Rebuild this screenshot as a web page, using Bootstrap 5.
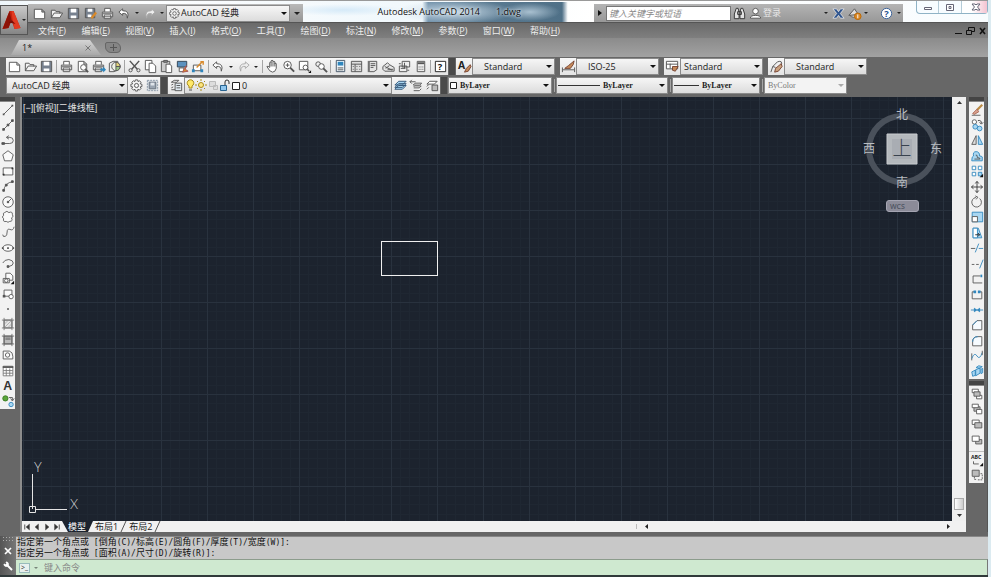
<!DOCTYPE html>
<html lang="zh-CN">
<head>
<meta charset="utf-8">
<meta name="viewport" content="width=device-width, initial-scale=1">
<title>Autodesk AutoCAD 2014 - 1.dwg</title>
<link href="https://cdn.jsdelivr.net/npm/bootstrap@5.3.0/dist/css/bootstrap.min.css" rel="stylesheet">
<style>
:root{--face:#676767;--canvas:#1c232e;--ink:#222}
body{font-family:"Open Sans","Noto Sans CJK SC",sans-serif;font-size:9px;line-height:12px;color:var(--ink);background:var(--face);border-right:3px solid #dcebf1}
button,select,input{font:inherit;color:inherit}
button{background:none;border:0;padding:0}
svg{display:block;flex:none;overflow:visible}
.caption{height:22px;border-top:1px solid #999;background:linear-gradient(90deg,#eef6fb,#fff 8%,#f1f8fc 40%,#fff 60%,#f8fcfe)}
.app-btn{width:28px;height:30px;border:1px solid #555;background:linear-gradient(#c9c9c9,#858585);z-index:3}
.app-slot{width:28px}
.qat{height:18px;background:linear-gradient(#b9b9b9,#959595);padding-left:3px;padding-right:3px}
.cell{width:16px;height:17px;display:flex;align-items:center;justify-content:center;flex:none}
.cell-wide{width:17px}
.cell-slim{width:8px}
.strip .cell-slim{width:9px}
.tri{width:0;height:0;border:3px solid transparent;border-top-color:#222;border-bottom:0}
.tri-sm{border-width:2px;border-bottom:0}
.doc-title{background:radial-gradient(ellipse 60px 12px at 52% 50%,#c9dbe8,transparent),radial-gradient(ellipse 30px 9px at 78% 50%,#a9c0d0,transparent),radial-gradient(ellipse 60px 6px at 14% 40%,#d6eaf8,transparent),linear-gradient(90deg,transparent 41%,#6f8fa8 43%,#5b7b92 60%,#4f7087 89%,transparent 91%);height:20px;color:#111;text-shadow:0 0 3px #fff}
.doc-left{width:177px}
.pick{appearance:none;border:1px solid #8a8a8a;border-radius:0;outline-offset:-1px;height:17px;padding:0 12px 0 5px;line-height:14px;background:linear-gradient(#f6f6f6,#dcdcdc) padding-box;color:#222}
.pick-wrap{position:relative;display:flex}
.pick-wrap::after{content:"";position:absolute;right:3px;top:7px;border:3px solid transparent;border-top-color:#111;border-bottom:0;pointer-events:none}
.pick-wrap.off::after{border-top-color:#aaa}
.pick-wrap.off .pick{background:#f3f3f3;color:#777;font-weight:400;opacity:1}
.w-style{width:83px}.w-ws{width:122px}.w-qws{width:124px}.w-color{width:104px}.w-lt{width:112px}.w-lw{width:88px}.w-layer{width:208px}
.pick.std{padding-left:11px}
.pick.has-gear{padding-left:14px}
.pick.has-swatch{padding-left:11px}
.pick.has-line{padding-left:46px}
.pick.has-dash{padding-left:29px}
.pick.has-layer{padding-left:57px}
.pick.pad-s{padding-left:3px}
.row-gap{margin-right:5px}
.prop{font-family:"Liberation Serif","Noto Sans CJK SC",serif;font-weight:700;font-size:8px}
.lead-icons{position:absolute;left:2px;top:1px;height:15px;display:flex;align-items:center;pointer-events:none}
.menubar{height:16px;background:linear-gradient(#6a6a6a,#7f7f7f);border-top:1px solid #555}
.menubar a{color:#eee;text-decoration:none;white-space:nowrap}
.menubar nav{padding-left:38px;width:560px}
.doc-tabs{height:19px;background:linear-gradient(#8b8b8b,#a2a2a2);padding-left:11px}
.doc-tab{width:90px;height:15px;background:linear-gradient(#d5d5d5,#a9a9a9);clip-path:polygon(8px 0,79px 0,90px 100%,0 100%);padding:0 10px 0 11px}
.new-tab{width:16px;height:11px;background:#858585;border:1px solid #666;border-radius:2px 6px 4px 6px}
.bar{height:19px;padding-left:6px}
.strip{height:17px;background:linear-gradient(#f7f7f7,#e4e4e4);display:flex;flex:none}
.rule{width:1px;height:13px;background:#a5a5a5;margin:2px 1px 2px 2px;flex:none}
.grip{width:6px;height:17px;background:#4a4a4a;flex:none;margin:0 1px}
.info{width:309px;height:18px;background:linear-gradient(#b4b4b4,#989898)}
.search{width:125px;height:15px;border:1px solid #777;background:#fff;font-style:italic;padding:0 2px;border-radius:0}
.search::placeholder,.cmd-in::placeholder{color:#888;opacity:1}
.win{width:72px;height:13px;border:1px solid #8fb3c6;border-top:0;border-radius:0 0 4px 4px;background:#f7fcff;margin-left:13px}
.win button{border-right:1px solid #b5ccd8;height:12px}
.win button:last-child{border:0;background:linear-gradient(90deg,#fff 40%,#f4c3d1)}
#work{margin-top:2px}
.palette{width:15px;background:#f2f2f2}
.palette .cell{width:15px;height:auto;flex:1 1 0}
.pal-top{width:15px;height:5px;background:#444;border-bottom:1px solid #888}
.pal-next{margin-top:2px}
.h-draw{height:307px}.h-mod{height:277px}.h-ord{height:97px}
.frame{border-left:2px solid #8c8c8c}
.side{width:20px}
.side-r{width:22px;padding-left:3px;border-right:1px solid #555}
.canvas{background:var(--canvas);position:relative;overflow:hidden}
.over{position:absolute}
.view-label{left:1px;top:5px;color:#e4e4e4;font-family:"Liberation Sans","Noto Sans CJK SC",sans-serif}
.shape{left:359px;top:144px;width:57px;height:35px;border:1px solid #f0f0f0}
.ucs{left:6px;bottom:0}
.cube{right:8px;top:9px}
.wcs{right:33px;top:103px;width:33px;height:12px;border:1px solid #a5a5b2;border-radius:3px;background:#8b8b98;color:#4d5361;font-size:7px;font-weight:600;line-height:9px;text-align:left;padding-left:3px}
.vscroll{width:14px;background:#efefef}
.thumb{width:10px;height:12px;border:1px solid #aaa;background:linear-gradient(90deg,#fff,#ccc)}
.layouts{height:11px;background:#f1f1f1}
.layouts .cell{width:10px;height:11px}
.lay{height:11px;line-height:11px;padding:0 2px}
.lay.on{background:var(--canvas);color:#fff;clip-path:polygon(0 0,100% 0,26px 100%,6px 100%);width:31px;padding:0 0 0 6px}
.slant{width:7px;height:11px}
.hscroll{width:314px;border-left:1px solid #bbb}
.cmd{margin-top:4px;border-bottom:2px solid #30393a}
.cmd-side{width:16px;background:linear-gradient(90deg,#555,#777)}
.dots{width:12px;height:5px;background:radial-gradient(#aaa 1px,transparent 1px) 0 0/3px 3px}
.history{background:#c8c8c8;border-top:1px solid #888;padding:0 1px;height:23px;line-height:11px;color:#111;font-family:"Liberation Sans","Noto Sans CJK SC",sans-serif}
.history p{margin:0;white-space:pre}
.history code{font:8px/10px "DejaVu Sans Mono",monospace;color:inherit}
.cmd-row{height:16px;background:#cfe9d0;border-top:1px solid #8c9c8c;border-right:1px solid #777}
.cmd-in{background:none;border:0;outline:0}
.prompt{width:11px;height:10px;border:1px solid #9bb;background:#e8f0ee;font-size:7px;line-height:8px;margin-left:3px}
</style>
<script src="https://cdn.jsdelivr.net/npm/bootstrap@5.3.0/dist/js/bootstrap.bundle.min.js"></script>
</head>
<body class="vh-100 d-flex flex-column overflow-hidden">

<header>
  <div class="caption d-flex align-items-end">
    <div class="app-slot align-self-start flex-shrink-0 pt-1">
      <button class="app-btn position-relative d-flex align-items-center" aria-label="应用程序菜单">
        <svg width="21" height="22" viewBox="0 0 20 22"><path d="M8 2h4l7 17-6 1-3-9-3 8-6 1z" fill="#c8230f"/><path d="M8 2l2 9-3 8-6 1z" fill="#8d1207"/><path d="M10 2l1 8 2 10 6-1L12 2z" fill="#e23a20"/><path d="M7 14l3-3 4 4-4-1z" fill="#7a0d05"/></svg>
        <i class="tri tri-sm"></i>
      </button>
    </div>
    <div class="qat d-flex align-items-center flex-shrink-0">
      <div class="d-flex" data-tools="new open save saveas print undo v redo v" data-wide></div>
      <label class="pick-wrap"><span class="lead-icons" data-icon="gear"></span>
        <select class="pick has-gear w-qws" aria-label="工作空间"><option>AutoCAD 经典</option></select></label>
      <button class="ps-1" aria-label="自定义"><i class="tri d-block"></i></button>
    </div>
    <div class="doc-title flex-fill d-flex align-items-center">
      <span class="doc-left text-end">Autodesk AutoCAD 2014</span><span class="ps-3">1.dwg</span>
    </div>
    <div class="info d-flex align-items-center flex-shrink-0">
      <button class="px-1" aria-label="展开"><svg width="4" height="6"><path d="M0 0l4 3-4 3z" fill="#111"/></svg></button>
      <input class="search" type="search" placeholder="键入关键字或短语" aria-label="搜索">
      <div class="d-flex" data-tools="find user"></div>
      <a href="#" class="text-white text-decoration-none opacity-75">登录</a>
      <div class="d-flex ms-auto" data-tools="v exch a360 v"></div>
      <div class="d-flex ms-2" data-tools="help v" data-wide></div>
    </div>
    <div class="win d-flex align-self-start">
      <button class="flex-fill" aria-label="最小化"><svg class="mx-auto" width="10" height="10" viewBox="0 0 10 10"><path d="M1.500 5.500h7v2h-7z" fill="#fff" stroke="#667"/></svg></button>
      <button class="flex-fill" aria-label="还原"><svg class="mx-auto" width="10" height="10" viewBox="0 0 10 10"><path d="M1.500 2.500h7v6h-7zM4 4.500h2v2H4z" fill="#fff" stroke="#667"/></svg></button>
      <button class="flex-fill ps-1" aria-label="关闭"><svg class="mx-auto" width="10" height="10" viewBox="0 0 10 10"><path d="M1 2h3l1 1 1-1h3L6.500 5 9 8H6L5 7 4 8H1l2.500-3z" fill="#fff" stroke="#667"/></svg></button>
    </div>
  </div>

  <div class="menubar d-flex align-items-center justify-content-between">
    <nav class="d-flex justify-content-between" aria-label="主菜单">
      <a href="#">文件(<u>F</u>)</a><a href="#">编辑(<u>E</u>)</a><a href="#">视图(<u>V</u>)</a><a href="#">插入(<u>I</u>)</a><a href="#">格式(<u>O</u>)</a><a href="#">工具(<u>T</u>)</a><a href="#">绘图(<u>D</u>)</a><a href="#">标注(<u>N</u>)</a><a href="#">修改(<u>M</u>)</a><a href="#">参数(<u>P</u>)</a><a href="#">窗口(<u>W</u>)</a><a href="#">帮助(<u>H</u>)</a>
    </nav>
    <svg width="34" height="10" viewBox="0 0 34 10" fill="none" stroke="#111"><path d="M1 7.500h7M12.500 4.500h5v4h-5zM14.500 4V1.500h6v4H18"/><path d="M26 2l5 6M31 2l-5 6" stroke-width="1.600"/></svg>
  </div>

  <div class="doc-tabs d-flex align-items-center">
    <div class="doc-tab d-flex justify-content-between align-items-center">
      <a href="#" class="text-reset text-decoration-none">1*</a>
      <button aria-label="关闭图形"><svg width="6" height="6" viewBox="0 0 6 6"><path d="M.5.5l5 5m0-5l-5 5" stroke="#777"/></svg></button>
    </div>
    <button class="new-tab ms-1 d-flex align-items-center justify-content-center" aria-label="新建图形"><svg width="7" height="7" viewBox="0 0 7 7"><path d="M3.500 0v7M0 3.500h7" stroke="#555"/></svg></button>
  </div>
</header>

<div class="bar d-flex align-items-center">
  <div class="strip" data-tools="new open save | print preview publish dwf | cut copy paste match block | undo v redo v | pan zoomrt zoomwin zoomprev | props dcenter palettes sheet markup calc | helpq"></div>
  <span class="grip"></span>
  <div class="strip" data-tools="tstyle"></div>
  <label class="pick-wrap row-gap"><select class="pick std w-style" aria-label="文字样式"><option>Standard</option></select></label>
  <div class="strip" data-tools="dstyle"></div>
  <label class="pick-wrap row-gap"><select class="pick std w-style" aria-label="标注样式"><option>ISO-25</option></select></label>
  <div class="strip" data-tools="tbstyle"></div>
  <label class="pick-wrap row-gap"><select class="pick pad-s w-style" aria-label="表格样式"><option>Standard</option></select></label>
  <div class="strip" data-tools="mlstyle"></div>
  <label class="pick-wrap"><select class="pick std w-style" aria-label="多重引线样式"><option>Standard</option></select></label>
</div>
<div class="bar d-flex align-items-center">
  <label class="pick-wrap"><select class="pick w-ws" aria-label="当前工作空间"><option>AutoCAD 经典</option></select></label>
  <div class="strip" data-tools="gear wsave"></div>
  <span class="grip"></span>
  <div class="strip" data-tools="layers"></div>
  <label class="pick-wrap"><span class="lead-icons"><svg width="56" height="14" viewBox="0 0 56 14" fill="none"><path d="M3 7a3.300 3.300 0 1 1 3 0v2H3z" fill="#ffe96a" stroke="#a98c1d"/><path d="M3 11h3" stroke="#555"/><circle cx="15" cy="6" r="2.500" fill="#ffe680" stroke="#a98c1d"/><path d="M15 0v2M15 10v2M9 6h2M19 6h2M11 2l1 1M18 9l1 1M19 2l-1 1M11 10l1-1" stroke="#a98c1d"/><path d="M23.500 2.500h6v5h-6zM27.500 6.500h4v4h-4z" fill="#ddd" stroke="#bbb"/><path d="M34.500 6.500h6v5h-6z" fill="#8fc6ee" stroke="#27638f"/><path d="M39 6V3q0-2 2-2t2 2v2" stroke="#333"/><path d="M46.500 3.500h7v7h-7z" fill="#fff" stroke="#222"/></svg></span>
    <select class="pick has-layer w-layer" aria-label="图层"><option>0</option></select></label>
  <div class="strip" data-tools="lcur lprev lstate"></div>
  <span class="grip"></span>
  <label class="pick-wrap prop"><span class="lead-icons"><svg width="8" height="9"><path d="M.5 1.500h6v6h-6z" fill="#fff" stroke="#222"/></svg></span>
    <select class="pick has-swatch w-color" aria-label="颜色"><option>ByLayer</option></select></label>
  <span class="rule"></span>
  <label class="pick-wrap prop"><span class="lead-icons"><svg width="42" height="3"><path d="M0 1.500h42" stroke="#333"/></svg></span>
    <select class="pick has-line w-lt" aria-label="线型"><option>ByLayer</option></select></label>
  <span class="rule"></span>
  <label class="pick-wrap prop"><span class="lead-icons"><svg width="25" height="3"><path d="M0 1.500h25" stroke="#333"/></svg></span>
    <select class="pick has-dash w-lw" aria-label="线宽"><option>ByLayer</option></select></label>
  <span class="rule"></span>
  <label class="pick-wrap prop off"><select class="pick pad-s w-style" disabled aria-label="打印样式"><option>ByColor</option></select></label>
</div>

<main class="flex-fill d-flex overflow-hidden" id="work">
  <aside class="side flex-shrink-0">
    <div class="pal-top"></div>
    <div class="palette h-draw d-flex flex-column" data-tools="line xline pline polygon rect arc circle cloud spline ellipse earc insert mkblock point hatch gradient region table mtext addsel"></div>
  </aside>
  <section class="frame flex-fill d-flex flex-column overflow-hidden">
    <div class="flex-fill d-flex overflow-hidden">
      <div class="canvas flex-fill">
        <svg class="w-100 h-100" aria-hidden="true">
          <defs><pattern id="grid" x="1" y="21" width="46" height="46" patternUnits="userSpaceOnUse">
            <path d="M9.500 0v46M18.500 0v46M28.500 0v46M37.500 0v46M0 9.500h46M0 18.500h46M0 28.500h46M0 37.500h46" stroke="#1f2732"/>
            <path d="M.5 0v46M0 .5h46" stroke="#29323e"/></pattern></defs>
          <rect width="100%" height="100%" fill="url(#grid)"/>
        </svg>
        <div class="over view-label">[−][俯视][二维线框]</div>
        <div class="over shape"></div>
        <svg class="over cube" width="86" height="88" viewBox="0 0 86 88" font-size="12" fill="#b9bdc2" text-anchor="middle">
          <circle cx="44" cy="43" r="33" fill="none" stroke="#4a515b" stroke-width="6"/>
          <path d="M29 28h30v30H29z" fill="#b4b8bc" stroke="#c8cbce"/><path d="M34 33h20v20H34z" fill="#a9adb3"/>
          <text x="44" y="49" fill="#39424e" font-size="19" font-family="'Noto Sans CJK SC'" font-weight="300">上</text>
          <text x="44" y="13">北</text><text x="11" y="47">西</text><text x="78" y="47">东</text><text x="44" y="81">南</text>
        </svg>
        <button class="over wcs">WCS</button>
        <svg class="over ucs" width="56" height="62" viewBox="0 0 56 62" fill="none" stroke="#e4e4e4"><path d="M4.500 15v35M8 50.500h31M1.500 47.500h6v6h-6z"/><g fill="#d8d8d8" stroke="none" font-family="Lato,sans-serif" font-weight="300" font-size="13"><text x="6" y="13">Y</text><text x="42" y="50">X</text></g></svg>
      </div>
      <div class="vscroll d-flex flex-column align-items-center justify-content-between py-1">
        <svg width="5" height="3"><path d="M0 3l2.500-3L5 3z" fill="#333"/></svg>
        <div class="d-flex flex-column align-items-center gap-1"><span class="thumb"></span><svg width="5" height="3"><path d="M0 0h5L2.500 3z" fill="#333"/></svg></div>
      </div>
    </div>
    <div class="layouts d-flex align-items-center">
      <div class="d-flex" data-tools="first prev next last"></div>
      <a href="#" class="lay on text-decoration-none">模型</a>
      <a href="#" class="lay text-reset text-decoration-none">布局1</a>
      <svg class="slant"><path d="M1 11L6 0" stroke="#555"/></svg>
      <a href="#" class="lay text-reset text-decoration-none">布局2</a>
      <svg class="slant"><path d="M1 11L6 0" stroke="#555"/></svg>
      <div class="hscroll ms-auto d-flex justify-content-between align-items-center ps-2 me-3">
        <svg width="3" height="5"><path d="M3 0v5L0 2.500z" fill="#222"/></svg><svg width="3" height="5"><path d="M0 0v5l3-2.500z" fill="#222"/></svg>
      </div>
    </div>
  </section>
  <aside class="side-r flex-shrink-0">
    <div class="pal-top"></div>
    <div class="palette h-mod d-flex flex-column" data-tools="erase mcopy mirror offset array move rotate scale stretch trim extend brkpt brk join chamfer fillet blend explode"></div>
    <div class="pal-top pal-next"></div>
    <div class="palette h-ord d-flex flex-column" data-tools="front back above under - textfront hatchback"></div>
  </aside>
</main>

<footer class="cmd d-flex">
  <div class="cmd-side d-flex flex-column align-items-center justify-content-between pb-1">
    <span class="dots"></span>
    <button aria-label="关闭命令行"><svg width="8" height="8" viewBox="0 0 8 8"><path d="M1 1l6 6m0-6L1 7" stroke="#fff" stroke-width="1.700"/></svg></button>
    <button aria-label="自定义命令行"><svg width="10" height="10" viewBox="0 0 10 10"><path d="M9 9L4 4" stroke="#fff" stroke-width="2"/><path d="M1 3a2.200 2.200 0 1 0 2-2l1 2-1 1z" fill="#fff" stroke="#fff"/></svg></button>
  </div>
  <div class="flex-fill">
    <div class="history" role="log">
      <p>指定第一个角点或<code> [</code>倒角<code>(C)/</code>标高<code>(E)/</code>圆角<code>(F)/</code>厚度<code>(T)/</code>宽度<code>(W)]:</code></p>
      <p>指定另一个角点或<code> [</code>面积<code>(A)/</code>尺寸<code>(D)/</code>旋转<code>(R)]:</code></p>
    </div>
    <div class="cmd-row d-flex align-items-center">
      <button class="prompt" aria-label="最近使用的命令">&gt;_</button><i class="tri tri-sm mx-1 opacity-50"></i>
      <input class="cmd-in flex-fill" placeholder="键入命令" aria-label="命令">
    </div>
  </div>
</footer>

<script>
// Toolbar glyphs on a 16 x 16 grid; the default pen is a thin grey line without fill.
const B='#2f86bd', L='#a9d7f2', O='#d98a2b';
const printer='<path d="M5 6V2.500h6V6M2.500 6.500h11v5h-11zM4.500 9.500h7v4h-7z" fill="#fff"/><path d="M3 7h10v2H3z" fill="#888" stroke="none"/>';
const sheet='<path d="M3.500 2.500h6l3 3v8h-9zM9.500 2.500v3h3" fill="#fff"/>';
const lens='<circle cx="7" cy="6.500" r="4" fill="#fff"/><path d="M10 9.500l4 4" stroke-width="2"/>';
const icons={
 new:'<path d="M2.500 3.500h8l3 3v7h-11zM10.500 3.500v3h3" fill="#fff"/>',
 open:'<path d="M2.500 12.500v-8h4l1 1.500h4v2M2.500 12.500l3-5h9l-3 5z" fill="#f2f2f2"/>',
 save:'<path d="M2.500 2.500h11v11h-11z" fill="#77818f"/><path d="M5 3h6v4H5zM5 10h6v3H5z" fill="#fff" stroke="none"/>',
 saveas:`<path d="M2.500 2.500h10v10h-10z" fill="#77818f"/><path d="M5 3h5v3H5zM5 9h4v3H5z" fill="#fff" stroke="none"/><path d="M14 7l-5 6" stroke="${O}" stroke-width="2.500"/>`,
 print:printer,
 preview:sheet+'<circle cx="9" cy="9" r="3" fill="#fff"/><path d="M11 11l3 3" stroke-width="2"/>',
 publish:printer+`<path d="M10 10h3V8l3 3.500-3 3v-2h-3z" fill="${B}" stroke="none"/>`,
 dwf:`<path d="M2.500 4.500l4-2h5v9l-4 2h-5z" fill="#eee"/><circle cx="9.500" cy="8" r="4.500" fill="#eef2e4"/><path d="M9.500 8V3.500A4.500 4.500 0 0 1 14 8z" fill="#e3d27a"/><path d="M9.500 8H14A4.500 4.500 0 0 1 9.500 12.500z" fill="#9cc583"/>`,
 cut:'<path d="M3 2l8 9M13 2L5 11" stroke-width="1.600"/><circle cx="3.800" cy="12" r="1.700"/><circle cx="12.200" cy="12" r="1.700"/>',
 copy:'<path d="M2.500 1.500h7v10h-7z" fill="#fff"/><path d="M6.500 4.500h4l3 3v7h-7z" fill="#fff"/>',
 paste:'<path d="M2.500 2.500h9v11h-9z" fill="#ccc"/><path d="M5 1.500h4v2H5z" fill="#888"/><path d="M7.500 5.500h4l2 2v7h-6z" fill="#fff"/>',
 match:`<path d="M2.500 2.500h10v6h-10z" fill="#5c91be" stroke="#345"/><path d="M4.500 9.500h5v4h-5z" fill="#fff"/><path d="M12 7l-1 4 3 2-6 1 2-4z" fill="${O}" stroke="#a55"/>`,
 block:`<path d="M2.500 6.500h8v6h-8z" fill="#fff"/><path d="M6 9l6-6M10 3h3v3" stroke="${O}" stroke-width="1.500"/><path d="M1 11h3v3H1zM10 11h3v3h-3z" fill="${B}" stroke="none"/>`,
 undo:'<path d="M6 3L2 6.500 6 10V8q5-1 5 5 3-8-5-8z" fill="#fff"/>',
 redo:'<path d="M10 3l4 3.500L10 10V8q-5-1-5 5-3-8 5-8z" fill="#eee" stroke="#aaa"/>',
 pan:'<path d="M5 9V4q1-2 1.500 0V2q1-1.500 2 0v1q1-1.500 2 0v2q1.500-1 1.500 0v5q-1 4-4 4-3 0-6-6 1-1 3 1M6.500 4v4M8.500 3v5M10.500 4v4" fill="#fff"/>',
 zoomrt:lens+'<path d="M7 4.500v4M5 6.500h4"/>',
 zoomwin:'<path d="M2.500 2.500h9v9h-9z" fill="#fff"/><circle cx="9" cy="9" r="2.500" fill="#fff"/><path d="M11 11l2 2" stroke-width="1.600"/><path d="M15 12v3h-3z" fill="#111" stroke="none"/>',
 zoomprev:'<circle cx="5.500" cy="5.500" r="2.500"/><circle cx="9" cy="8" r="3" fill="#fff"/><path d="M11 10l4 4" stroke-width="2"/>',
 props:`<path d="M3.500 1.500h9v12h-9z" fill="#eef6fb" stroke="#456"/><path d="M5 3h6v4H5z" fill="${B}" stroke="none"/><path d="M5 9.500h6M5 11.500h6"/>`,
 dcenter:'<path d="M2.500 2.500h11v11h-11zM2.500 5.500h11M6.500 5.500v8M8 8h1M11 8h1M8 11h1M11 11h1M4 8h1M4 11h1" fill="#ddd"/>',
 palettes:'<path d="M4.500 2.500h8v9l-3 2h-5zM6 5h5M6 7h5M6 9h3" fill="#e5e5e5"/><path d="M3.500 2v12"/>',
 sheet:'<path d="M2 8l5-4 2 2 5 3v4H4l-2-2zM5 10l4-3M7 11h6M4 8l8 4" fill="#e5e5e5"/>',
 markup:'<path d="M5.500 2.500h8v6h-8zM2.500 7.500h8v6h-8zM4 5H2M13 12h-2M8 4v6M4 10h5" fill="#eee"/>',
 calc:'<path d="M4.500 2.500h8v11h-8z" fill="#eee"/><path d="M5 4.500h7" stroke-width="2"/><path d="M6 8.500h5M6 11h5" stroke-dasharray="1 1"/>',
 helpq:'<path d="M2.500 2.500h11v11h-11z" fill="#fff" stroke="#222"/><text x="5" y="12" fill="#111" stroke="none" font-weight="700" font-size="10">?</text>',
 tstyle:`<text x="1" y="11" fill="#222" stroke="none" font-weight="700" font-size="11">A</text><path d="M14 6l-4 4-2 4 4-1 3-5z" fill="#c58a5a" stroke="#743"/>`,
 dstyle:`<path d="M1.500 9v5M14.500 9v5M2 11.500h12"/><path d="M14 2L8 7l-4 3h6l3-4z" fill="#c58a5a" stroke="#743"/>`,
 tbstyle:`<path d="M1.500 2.500h12v8h-12zM1.500 5.500h12M5.500 5v5" fill="#fff"/><path d="M8 8h6l-3 5-3-1z" fill="#c58a5a" stroke="#743"/>`,
 mlstyle:`<path d="M2 14l2-6 5-5q6-2 4 4l-3 3M4 8l3 1"/><path d="M13 5l-6 5-1 4 4-1 4-5z" fill="#c9a27f" stroke="#743"/>`,
 gear:'<path d="M6.800 2h2.400l.4 1.800 1.600-.9 1.600 1.700-.9 1.600 1.900.5v2.400l-1.900.4.900 1.700-1.700 1.700-1.600-.9-.4 1.900H6.800l-.4-1.900-1.700.9L3 11.200l.9-1.700-1.900-.4V6.700l1.900-.5L3 4.600l1.700-1.700 1.600.9z" fill="#f4f4f4"/><circle cx="8" cy="8" r="2.200"/>',
 wsave:'<path d="M2.500 2.500h11v11h-11z" stroke="#8895a5" fill="#dbe1e6" stroke-dasharray="2 1"/><path d="M4.500 4.500h7v7h-7z" fill="#9aa5b1" stroke="#66717e"/><path d="M6 5h4v3H6z" fill="#dfe5ea" stroke="none"/>',
 layers:'<path d="M2.500 4.500l3-2h5l-2 2zM2.500 7.500l2-1M2.500 10.500l2-1M2.500 12.500h4" fill="#fff"/><path d="M6.500 5.500h7v8h-7zM8 8h4M8 10.500h4" fill="#dfe9f0"/>',
 lcur:`<path d="M2 12l4-4h8l-4 4zM2 10l4-4h8l-4 4zM2 7.500l4-4h8l-4 4z" fill="${L}" stroke="#357"/>`,
 lprev:'<path d="M1 4h6M3 2L1 4l2 2M6.500 5.500h7l-2 2h-7zM5 9.500l1-1h7l-2 2H5M5 13.500h6l2-2" fill="#fff"/>',
 lstate:'<path d="M5 3.500h8l-3 3H2zM2 9l2-2M2 12l2-2" fill="#fff"/><path d="M7.500 7.500h6v6h-6z" fill="#bbb"/>',
 find:'<path d="M4.500 2.500h2l1 4v7h-5v-5zM11.500 2.500h-2l-1 4v7h5v-5zM6 6h4v3H6z" fill="#e2e2e2" stroke="#333"/>',
 user:'<circle cx="8" cy="5.500" r="3" fill="#fff"/><path d="M2.500 13q0-3 5.500-3t5.500 3z" fill="#fff"/>',
 exch:'<path d="M2 3h4l2 3 2-3h4l-4 5 4 5h-4l-2-3-2 3H2l4-5z" fill="#31568f" stroke="#ddd"/>',
 a360:`<path d="M2 10L8 3l4 6zM3 10q4 4 8 0" fill="#ddd"/><circle cx="11.500" cy="11" r="3.500" fill="${O}" stroke="#b60"/><path d="M11.500 9v4" stroke="#fff"/>`,
 help:'<circle cx="8" cy="8" r="5.500" fill="#fff" stroke="#345d96"/><text x="5.500" y="12" font-size="10" font-weight="700" fill="#234f91" stroke="none">?</text>',
 line:'<path d="M3 13L13 3"/><path d="M2 12h2v2H2zM12 2h2v2h-2z" fill="#555" stroke="none"/>',
 xline:'<path d="M2 14L14 2"/><path d="M2 12h2v2H2zM7 7h2v2H7zM12 2h2v2h-2z" fill="#555"/>',
 pline:'<path d="M2 12h8q4 0 4-3.500T10 5H7M9 3L6 5l3 2"/><path d="M1 11h3v2H1z" fill="#555"/>',
 polygon:'<path d="M8 2l6 4.500L12 13.500H4L2 6.500z" fill="#fafafa"/>',
 rect:'<path d="M2.500 4.500h11v8h-11z" fill="#fafafa"/><path d="M2 11h2v2H2zM12 4h2v2h-2z" fill="#333" stroke="none"/>',
 arc:'<path d="M3 14Q4 4 14 3"/><path d="M2 12h2v2H2zM5 6h2v2H5zM12 2h2v2h-2z" fill="#555"/>',
 circle:'<circle cx="8" cy="8" r="6" fill="#fafafa"/><circle cx="8" cy="8" r="1" fill="#333"/><path d="M8 8l4-4"/>',
 cloud:'<path d="M4 3q3-3 5 0 4-2 4 2 2 3-1 4 2 4-2 4-2 2-4 0-4 1-3-3-3-2 0-4-1-3 1-3z" fill="#fafafa"/>',
 spline:'<path d="M2 11q0 3 3 2 2-1 2-5t3-3q4 2 5-3"/>',
 ellipse:'<ellipse cx="8" cy="8" rx="6" ry="3.700" fill="#fafafa"/><path d="M1 7h2v2H1zM13 7h2v2h-2zM7 7h2v2H7z" fill="#555" stroke="none"/>',
 earc:'<path d="M2 8q2-4 7-4 5 1 5 4t-5 4"/><path d="M7 11h2v2H7z" fill="#555"/>',
 insert:'<path d="M5.500 2.500h5l3 3v5h-8z" fill="#fafafa"/><path d="M2.500 8.500h7v5h-7z" fill="#fafafa"/><circle cx="6" cy="11" r="2"/><path d="M15 11v4h-4z" fill="#111" stroke="none"/>',
 mkblock:'<path d="M3.500 3.500h9v7h-9z" fill="#fafafa"/><path d="M2 9h3v3H2z" fill="#555" stroke="none"/><circle cx="11.500" cy="11" r="2.500" fill="#fff"/>',
 point:'<path d="M7.500 7.500h1v1h-1z" fill="#444"/>',
 hatch:'<path d="M3.500 3.500h9v9h-9z" fill="#e4e4e4"/><path d="M4 8l4-4M4 12l8-8M8 12l4-4" stroke="#aaa"/><path d="M1 3.500h14M1 12.500h14M3.500 1v14M12.500 1v14" stroke="#777" />',
 gradient:'<path d="M3.500 3.500h9v9h-9z" fill="#bbb"/><path d="M5 5h6v3H5z" fill="#888" stroke="none"/><path d="M1 3.500h14M1 12.500h14M3.500 1v14M12.500 1v14" stroke="#666"/>',
 region:'<path d="M2.500 3.500h7q4 1 4 6v3h-11z" fill="#fafafa"/><circle cx="7.500" cy="8" r="2.500"/>',
 table:'<path d="M2.500 2.500h11v11h-11zM2.500 7.500h11M2.500 10.500h11M6 5v8.500M10 5v8.500" fill="#fff" stroke="#777"/><path d="M2 3.500h12" stroke-width="2"/>',
 mtext:'<text x="2.500" y="13" font-size="14" font-weight="700" font-family="Liberation Sans" fill="#333" stroke="none">A</text>',
 addsel:`<circle cx="5" cy="5" r="3" fill="#5aa53a" stroke="#3c7a22"/><path d="M9 4h4v3M11 5l2 3 2-3"/><circle cx="11.500" cy="12" r="2.500" fill="${L}" stroke="${B}"/>`,
 erase:'<path d="M14 2L8 8" stroke="#b98a42" stroke-width="2.500"/><path d="M8 7l2 3-5 3-2-1z" fill="#d8a08c" stroke="#a65"/><path d="M2 14h10"/>',
 mcopy:`<circle cx="5" cy="4.500" r="2.500" fill="#fff"/><path d="M9 3q4-1 4 3M11 5l2 2 2-2" stroke="#333"/><circle cx="6" cy="10" r="2.700" fill="${L}" stroke="${B}"/><circle cx="11" cy="12" r="2.700" fill="${L}" stroke="${B}"/>`,
 mirror:`<path d="M7 3v10H2z" fill="#ddd"/><path d="M9.500 3v10h5z" fill="${L}" stroke="${B}"/>`,
 offset:`<path d="M2 13.500h12V9q-1-1-3-1 0-5-4-5T4 8Q2 8 2 13.500z" fill="${L}" stroke="${B}"/><path d="M5 11.500h6.500q0-2-3-1.500 0-4-2-3"/>`,
 array:`<path d="M2.500 2.500h4v4h-4zM9.500 2.500h4v4h-4zM2.500 9.500h4v4h-4z" fill="#fff" stroke="${B}"/><path d="M9.500 9.500h4v4h-4z" fill="${L}" stroke="${B}"/><path d="M15 11v4h-4z" fill="#111" stroke="none"/>`,
 move:'<path d="M8 2v12M2 8h12M6 4l2-2.500L10 4M6 12l2 2.500 2-2.500M4 6L1.500 8 4 10M12 6l2.500 2-2.500 2" stroke="#333"/>',
 rotate:'<path d="M11 4a5.500 5.500 0 1 1-4-1.200M6 1l3 1.500L7 5"/>',
 scale:`<path d="M2.500 2.500h12v11h-12z" fill="${L}" stroke="${B}"/><path d="M2.500 7.500h6v6h-6z" fill="#fff"/>`,
 stretch:`<path d="M3.500 2.500h6l4 11h-10z" fill="${L}" stroke="${B}"/><path d="M3.500 2.500h5v11h-5z" fill="#fff" stroke="${B}"/><path d="M6 10h5M9 8l2 2-2 2" stroke="#222"/>`,
 trim:`<path d="M1 8.500h5" stroke="#555"/><path d="M10 8.500h5" stroke="${B}"/><path d="M6 13l4-10" stroke="${B}"/>`,
 extend:`<path d="M2 8.500h3M7 8.500h3" stroke="#555"/><path d="M11 13l4-10" stroke="${B}"/>`,
 brkpt:'<path d="M12 4.500H3.500v8H14"/><path d="M12 3h2v3h-2z" fill="#2f86bd" stroke="none"/>',
 brk:'<path d="M5 5.500H2.500v8h11v-8H11"/><path d="M4 4h3v3H4zM9 4h3v3H9z" fill="#2f86bd" stroke="none"/>',
 join:`<path d="M1 8h14" stroke="${B}"/><path d="M5 6l2.500 2L5 10zM11 6L8.500 8l2.500 2z" stroke="${B}" fill="${B}"/>`,
 chamfer:`<path d="M3 13.500V8l5-5h5.500v10.500z" fill="#f6fbff"/><path d="M3 8l5-5" stroke="${B}"/>`,
 fillet:`<path d="M3 13.500V9q0-6 6-6h4.500v10.500z" fill="#f6fbff"/><path d="M3 9q0-6 6-6" stroke="${B}"/>`,
 blend:`<path d="M2 5v8"/><path d="M2 11q3-8 6-3t6-4" stroke="${B}"/><path d="M14 2v5"/>`,
 explode:`<path d="M2 9l4-2v6l-3 1zM6.500 6.500l5-2v6l-5 3zM7 4l3-2 4 1-3 2zM12.500 6l2-1v5l-2 1z" fill="${L}" stroke="${B}"/>`,
 front:'<path d="M2.500 2.500h7v4h-7zM7.500 9.500h6v4h-6z" fill="#fff"/><path d="M4.500 5.500h7v5h-7z" fill="#bbb"/>',
 back:'<path d="M4.500 5.500h7v5h-7z" fill="#bbb"/><path d="M2.500 2.500h7v4h-7zM7.500 8.500h6v5h-6z" fill="#fff"/>',
 above:'<path d="M2.500 3.500h8v5h-8z" fill="#fff"/><path d="M5.500 6.500h8v6h-8z" fill="#bbb"/>',
 under:'<path d="M6.500 7.500h7v5h-7z" fill="#bbb"/><path d="M2.500 3.500h8v6h-8z" fill="#fff"/>',
 textfront:'<text x="1" y="7" font-size="6" font-weight="700" fill="#222" stroke="none">ABC</text><path d="M4 9.500v3h6"/><path d="M15 11v4h-4z" fill="#111" stroke="none"/>',
 hatchback:'<path d="M2.500 2.500h8v7h-8z" fill="#bbb"/><path d="M12 6.500h2v7h-6M5 10v3h3" stroke-dasharray="2 1"/>',
 first:'<path d="M3.500 3v10" stroke-width="2"/><path d="M13 2v12L6 8z" fill="#333"/>', prev:'<path d="M11 2v12L4 8z" fill="#333"/>',
 next:'<path d="M5 2v12l7-6z" fill="#333"/>', last:'<path d="M12.500 3v10" stroke-width="2"/><path d="M3 2v12l7-6z" fill="#333"/>'
};
const svg=(n,s)=>`<svg width="${s}" height="${s}" viewBox="0 0 16 16" fill="none" stroke="#555">${icons[n]}</svg>`;
document.querySelectorAll('[data-icon]').forEach(e=>e.innerHTML=svg(e.dataset.icon,13));
document.querySelectorAll('[data-tools]').forEach(e=>{
  const size=e.closest('.layouts')?8:e.matches('.palette')?14:15, wide='wide' in e.dataset?' cell-wide':'';
  e.innerHTML=e.dataset.tools.split(' ').map(n=>
    n==='|'?'<span class="rule"></span>':
    n==='-'?'<hr class="m-0 mt-1">':
    n==='v'?'<button class="cell cell-slim" aria-label="更多"><i class="tri tri-sm"></i></button>':
    `<button class="cell${wide}" aria-label="${n}">${svg(n,size)}</button>`).join('');
});
</script>
</body>
</html>
